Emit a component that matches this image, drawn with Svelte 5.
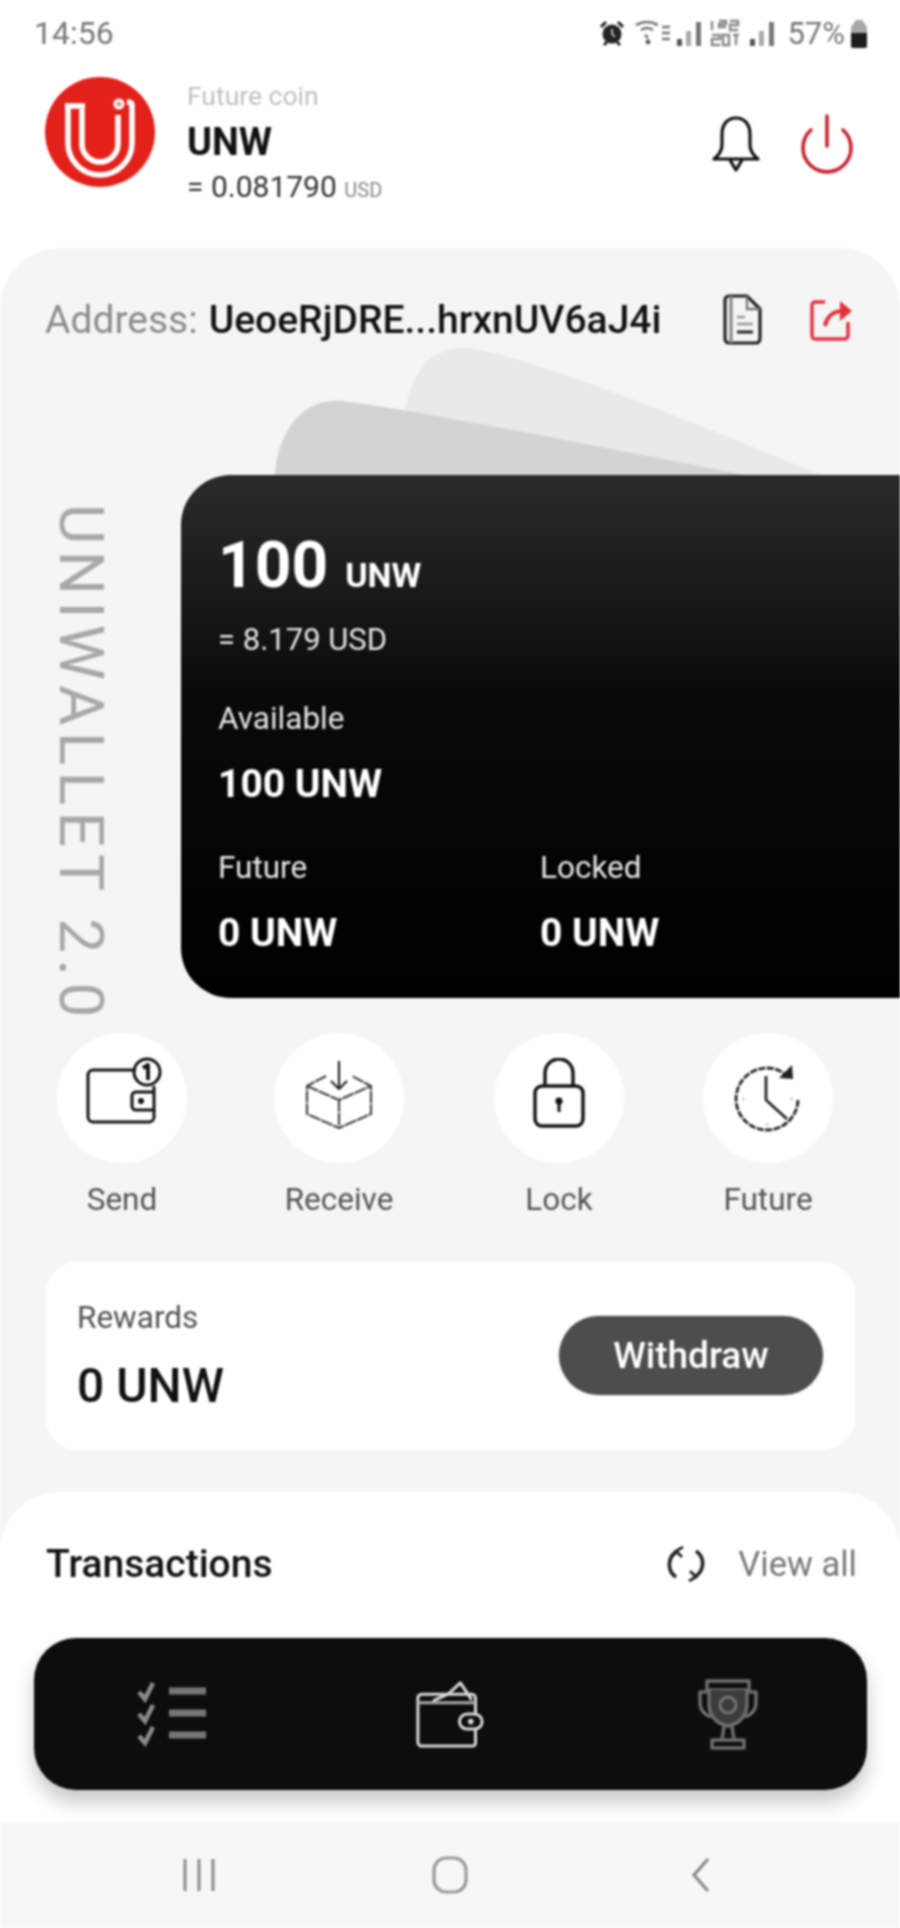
<script>
  const actions = ["send", "receive", "lock", "future"];
  const labels = { send: "Send", receive: "Receive", lock: "Lock", future: "Future" };
</script>

<div class="screen">
  <div class="statusbar">
    <span class="time">14:56</span>
    <div class="status-right">
      <svg width="26" height="26" viewBox="0 0 26 26"><circle cx="13" cy="14" r="9.5" fill="#222"/><path d="M2 7l5-5M24 7l-5-5M5 25l3-3M21 25l-3-3" stroke="#222" stroke-width="3"/><path d="M13 9v5l3 3" stroke="#ddd" stroke-width="1.6" fill="none"/></svg>
      <svg class="st-wifi" width="36" height="26" viewBox="0 0 36 26" fill="none" stroke="#777" stroke-width="2.6"><path d="M1 5q11-6 22 0M6 10q6-4 12 0M10 15l3 3"/><circle cx="13" cy="22" r="2.4" fill="#555" stroke="none"/><path d="M27 7h8M27 13h8M27 19h8"/></svg>
      <svg class="st-sig" width="26" height="26" viewBox="0 0 26 26" fill="#777"><rect x="1" y="19" width="5" height="7" fill="#555"/><rect x="10" y="11" width="5" height="15" fill="#aaa"/><rect x="20" y="2" width="5" height="24"/></svg>
      <svg class="st-lte" width="32" height="28" viewBox="0 0 32 28" fill="none" stroke="#888" stroke-width="2.4"><path d="M3 2v9M10 2h7v3h-7v3h7M21 2h8v4h-8v5h8M3 16h8v4H3v6h8M14 16h6v10h-6zM24 16h6M27 16v10"/></svg>
      <svg class="st-sig" width="26" height="26" viewBox="0 0 26 26" fill="#777"><rect x="1" y="19" width="5" height="7" fill="#555"/><rect x="10" y="11" width="5" height="15" fill="#aaa"/><rect x="20" y="2" width="5" height="24"/></svg>
      <span class="battery-text">57%</span>
      <svg class="st-bat" width="18" height="30" viewBox="0 0 18 30"><path d="M6 2h6l5 7v19a2 2 0 0 1-2 2H3a2 2 0 0 1-2-2V9z" fill="#a8a8a8"/><path d="M1 15h16v13a2 2 0 0 1-2 2H3a2 2 0 0 1-2-2z" fill="#1d1d1d"/></svg>
    </div>
  </div>

  <header class="top">
    <svg class="logo" viewBox="0 0 110 110">
      <circle cx="55" cy="55" r="55" fill="#e3211b"/>
      <path d="M23 30v36a32 32 0 0 0 64 0V28c0-2-2-3-5-3" fill="none" stroke="#fff" stroke-width="5.5"/>
      <path d="M37 32v35a18 18 0 0 0 36 0V38" fill="none" stroke="#fff" stroke-width="5.5"/>
      <path d="M20 29h20" fill="none" stroke="#fff" stroke-width="5.5"/>
      <circle cx="74" cy="27" r="4" fill="#e88" stroke="#fff" stroke-width="3"/>
    </svg>
    <div class="coin">
      <div class="coin-kind">Future coin</div>
      <div class="coin-name">UNW</div>
      <div class="coin-price">= 0.081790 <small>USD</small></div>
    </div>
    <div class="top-icons">
      <svg width="50" height="58" viewBox="0 0 50 58" fill="none" stroke="#111" stroke-width="3.2" stroke-linejoin="round"><path d="M25 3c-9 0-14 7-14 16v11c0 6-3 10-8 14h44c-5-4-8-8-8-14V19c0-9-5-16-14-16z"/><path d="M19 45l6 10 6-10"/></svg>
      <svg width="56" height="60" viewBox="0 0 56 60" fill="none" stroke="#c7242e" stroke-width="3.6" stroke-linecap="round"><path d="M28 2v30"/><path d="M12 16a24 24 0 1 0 32 0"/></svg>
    </div>
  </header>

  <main class="panel">
    <div class="address">
      <span class="address-label">Address:</span>
      <span class="address-value">UeoeRjDRE...hrxnUV6aJ4i</span>
      <svg class="doc" width="44" height="54" viewBox="0 0 44 54" fill="none" stroke="#222" stroke-width="3.2"><path d="M4 7a4 4 0 0 1 4-4h18l13 13v30a4 4 0 0 1-4 4H8a4 4 0 0 1-4-4z"/><path d="M10 3v47" stroke="#888"/><path d="M26 3v13h13" stroke="#777" stroke-width="2.4"/><path d="M16 24h8M16 31h16" stroke="#999" stroke-width="2.6"/><path d="M16 39h16" stroke-width="3"/></svg>
      <svg class="share" width="44" height="44" viewBox="0 0 44 44" fill="none" stroke="#e4303a" stroke-width="3.4" stroke-linejoin="round"><path d="M16 4H6a3 3 0 0 0-3 3v31a3 3 0 0 0 3 3h30a3 3 0 0 0 3-3V24"/><path d="M16 28c2-10 9-15 18-15" stroke-width="4"/><path d="M31 3l12 10-12 10z" fill="#e4303a" stroke="none"/></svg>
    </div>

    <div class="hero">
      <svg class="fans" viewBox="0 0 640 130">
        <path d="M125 130c-2-60 10-132 68-127 70 10 257 87 352 127z" fill="#e9e9e9"/>
        <path d="M0 130c2-30 18-78 68-74 80 10 287 52 402 74z" fill="#d3d3d3"/>
      </svg>
      <div class="brand">UNIWALLET 2.0</div>
      <section class="card">
        <div class="balance"><span class="balance-num">100</span> <span class="balance-unit">UNW</span></div>
        <div class="balance-usd">= 8.179 USD</div>
        <div class="card-label available">Available</div>
        <div class="card-value">100 UNW</div>
        <div class="split">
          <div>
            <div class="card-label">Future</div>
            <div class="card-value">0 UNW</div>
          </div>
          <div>
            <div class="card-label">Locked</div>
            <div class="card-value">0 UNW</div>
          </div>
        </div>
      </section>
    </div>

    <div class="actions">
      {#each actions as a}
        <div class="action">
          <div class="action-circle">
            {#if a === "send"}
              <svg class="icon-send" width="80" height="70" viewBox="0 0 80 70" fill="none" stroke="#111" stroke-width="3" stroke-linejoin="round"><path d="M52 15H9a5 5 0 0 0-5 5v42a5 5 0 0 0 5 5h56a5 5 0 0 0 5-5V55"/><path d="M70 37v-6M70 55H52a4 4 0 0 1-4-4V41a4 4 0 0 1 4-4h18z"/><circle cx="57" cy="46" r="1.5" fill="#111"/><circle cx="63" cy="17" r="13"/><path d="M59 13l5-3v15" stroke-width="3.8"/></svg>
            {:else if a === "receive"}
              <svg class="icon-receive" width="68" height="68" viewBox="0 0 68 68" fill="none" stroke="#444" stroke-width="2.2" stroke-linejoin="round" stroke-dasharray="12 1"><path d="M21 15L2 25v28l32 14 32-14V25L47 15"/><path d="M2 25l32 14 32-14M34 39v28"/><path d="M34 0v27M26 20l8 8 8-8" stroke="#222" stroke-dasharray="none"/></svg>
            {:else if a === "lock"}
              <svg class="icon-lock" width="54" height="70" viewBox="0 0 54 70" fill="none" stroke="#111" stroke-width="3.4"><path d="M13 28V15a14 14 0 0 1 28 0v13"/><rect x="3" y="28" width="48" height="40" rx="7"/><path d="M27 44v10" stroke-width="3"/><circle cx="27" cy="43" r="3.6" fill="#111" stroke="none"/></svg>
            {:else}
              <svg class="icon-future" width="72" height="72" viewBox="0 0 72 72" fill="none" stroke="#222" stroke-width="2.8"><path d="M66 38a31 31 0 1 1-32-32c8 0 15 2 21 8" stroke-dasharray="7 1.5"/><path d="M60 3l1 14-14-1z" fill="#222" stroke="none"/><path d="M34 14v24l21 19"/><path d="M11 37h1M35 62v1M59 37h1" stroke-width="3" stroke="#888"/></svg>
            {/if}
          </div>
          <span>{labels[a]}</span>
        </div>
      {/each}
    </div>

    <section class="rewards">
      <div>
        <div class="rewards-label">Rewards</div>
        <div class="rewards-value">0 UNW</div>
      </div>
      <button class="withdraw">Withdraw</button>
    </section>

    <section class="transactions">
      <div class="tx-head">
        <h2>Transactions</h2>
        <svg class="refresh" width="38" height="36" viewBox="0 0 38 36" fill="none" stroke="#222" stroke-width="3.6"><path d="M11 5a15 15 0 0 0-2 26"/><path d="M27 31a15 15 0 0 0 2-26"/><path d="M16 1l-7 4 6 6M22 35l7-4-6-6" stroke-width="2.8"/></svg>
        <span class="view-all">View all</span>
      </div>
      <nav class="tabbar">
        <svg width="72" height="66" viewBox="0 0 72 66" fill="none" stroke="#8a8a8a"><path d="M2 11l6 7L16 2M2 33l6 7 8-16M2 55l6 7 8-16" stroke-width="4.6"/><path d="M32 10h37M32 32h37M32 54h37" stroke="#777" stroke-width="7"/></svg>
        <svg width="68" height="68" viewBox="0 0 72 72" fill="none" stroke="#d8d8d8" stroke-width="3.2" stroke-linejoin="round"><path d="M6 15h53a4 4 0 0 1 4 4v48a3 3 0 0 1-3 3H6a4 4 0 0 1-4-4V19a4 4 0 0 1 4-4z"/><path d="M2 24h61" stroke="#aaa"/><path d="M18 22l16-7 13-12 12 18"/><rect x="46" y="36" width="24" height="16" rx="8" fill="#0d0d0d"/><circle cx="58" cy="44" r="3" fill="#d8d8d8" stroke="none"/></svg>
        <svg width="62" height="72" viewBox="0 0 62 72" fill="none" stroke="#6e6e6e" stroke-width="3.4" stroke-linejoin="round"><path d="M10 3h42v9H10z"/><path d="M12 12v14c0 12 8 20 19 22 11-2 19-10 19-22V12" fill="#3b3b3b"/><path d="M12 14H3v10c0 8 5 13 11 15M50 14h9v10c0 8-5 13-11 15"/><circle cx="31" cy="27" r="8"/><path d="M27 48l-2 14M35 48l2 14"/><path d="M15 62h32v8H15z"/></svg>
      </nav>
    </section>
  </main>

  <footer class="sysnav">
    <svg width="34" height="34" viewBox="0 0 34 34" stroke="#8a8a8a" stroke-width="3"><path d="M3 1v32M17 1v32M31 1v32"/></svg>
    <svg width="38" height="38" viewBox="0 0 38 38" fill="none" stroke="#999" stroke-width="3.2"><rect x="3" y="2" width="32" height="34" rx="12"/></svg>
    <svg width="22" height="36" viewBox="0 0 22 36" fill="none" stroke="#8a8a8a" stroke-width="3.2"><path d="M18 2L4 18l14 16"/></svg>
  </footer>
</div>

<style>
  :global(body) {
    margin: 0;
    background: #fff;
  }
  .screen {
    width: 900px;
    height: 1928px;
    overflow: hidden;
    display: flex;
    flex-direction: column;
    font-family: Roboto, "Liberation Sans", sans-serif;
    background: #fff;
    color: #111;
    /* the source screenshot is a soft upscale */
    filter: blur(1px);
  }

  /* status bar */
  .statusbar {
    height: 66px;
    padding: 0 32px 0 34px;
    display: flex;
    align-items: center;
    justify-content: space-between;
    flex-shrink: 0;
  }
  .time {
    font-size: 32px;
    color: #777;
  }
  .status-right {
    display: flex;
    align-items: center;
  }
  .st-wifi {
    margin-left: 10px;
  }
  .st-sig {
    margin-left: 5px;
  }
  .st-lte {
    margin-left: 7px;
  }
  .st-lte + .st-sig {
    margin-left: 8px;
  }
  .battery-text {
    font-size: 31px;
    color: #777;
    margin-left: 12px;
  }
  .st-bat {
    margin-left: 5px;
  }

  /* coin header */
  .top {
    height: 182px;
    padding: 11px 44px 0 45px;
    box-sizing: border-box;
    display: flex;
    align-items: flex-start;
    flex-shrink: 0;
  }
  .logo {
    width: 110px;
    height: 110px;
    flex-shrink: 0;
  }
  .coin {
    margin-left: 32px;
    margin-top: 2px;
  }
  .coin-kind {
    font-size: 26.5px;
    line-height: 34px;
    color: #c0c0c0;
  }
  .coin-name {
    font-size: 38px;
    line-height: 42px;
    font-weight: 700;
    margin-top: 8px;
  }
  .coin-price {
    font-size: 30px;
    line-height: 40px;
    margin-top: 4px;
    color: #333;
  }
  .coin-price small {
    font-size: 20px;
    color: #888;
  }
  .top-icons {
    margin-left: auto;
    margin-top: 37px;
    margin-right: 1px;
    display: flex;
    align-items: center;
    gap: 38px;
  }

  /* grey panel */
  .panel {
    flex: 1;
    background: #f5f5f5;
    border-radius: 60px 60px 0 0;
    display: flex;
    flex-direction: column;
    min-height: 0;
  }
  .address {
    height: 72px;
    margin-top: 36px;
    padding: 0 47px 0 45px;
    display: flex;
    align-items: center;
    font-size: 39px;
    font-weight: 500;
  }
  .address-label {
    color: #8b8b8b;
    font-weight: 400;
    margin-right: 11px;
  }
  .doc {
    margin-left: auto;
  }
  .share {
    margin-left: 44px;
  }

  /* balance card */
  .hero {
    position: relative;
    margin-top: 119px;
    display: flex;
    height: 523px;
  }
  .fans {
    position: absolute;
    left: 275px;
    top: -130px;
    width: 640px;
    height: 130px;
  }
  .brand {
    position: absolute;
    left: 50px;
    top: 29px;
    writing-mode: vertical-rl;
    font-size: 62px;
    line-height: 62px;
    letter-spacing: 6.5px;
    color: #a8a8a8;
    white-space: nowrap;
  }
  .card {
    margin-left: 181px;
    flex: 1;
    box-sizing: border-box;
    padding: 54px 0 0 37px;
    border-radius: 50px 0 0 50px;
    background: linear-gradient(#2b2b2b, #0a0a0a 42%, #000);
    color: #fff;
  }
  .balance {
    display: flex;
    align-items: baseline;
    gap: 17px;
    height: 74px;
    line-height: 74px;
  }
  .balance-num {
    font-size: 64px;
    font-weight: 700;
  }
  .balance-unit {
    font-size: 34px;
    font-weight: 700;
  }
  .balance-usd {
    font-size: 31px;
    line-height: 36px;
    margin-top: 19px;
    color: #e4e4e4;
  }
  .card-label {
    font-size: 31.5px;
    line-height: 36px;
    color: #e6e6e6;
  }
  .available {
    margin-top: 43px;
  }
  .card-value {
    font-size: 39px;
    line-height: 44px;
    font-weight: 700;
    margin-top: 25px;
  }
  .split {
    display: flex;
    margin-top: 44px;
  }
  .split > div {
    width: 322px;
  }

  /* round actions */
  .actions {
    height: 177px;
    margin-top: 35px;
    position: relative;
    display: grid;
    grid-template-columns: 217px 220px 209px 1fr;
    padding-left: 12px;
    flex-shrink: 0;
  }
  .action {
    display: flex;
    flex-direction: column;
    align-items: center;
    width: 220px;
    font-size: 31.5px;
    color: #555;
  }
  .action-circle {
    width: 130px;
    height: 130px;
    border-radius: 50%;
    background: #fff;
    display: flex;
    align-items: center;
    justify-content: center;
  }
  .icon-send {
    margin: -16px 0 0 4px;
    flex-shrink: 0;
  }
  .icon-receive {
    margin-top: -6px;
  }
  .icon-lock {
    margin-top: -10px;
  }
  .action span {
    margin-top: 20px;
    line-height: 34px;
  }

  /* rewards */
  .rewards {
    margin: 52px 45px 0 46px;
    height: 188px;
    flex-shrink: 0;
    box-sizing: border-box;
    padding: 0 32px 0 31px;
    background: #fff;
    border-radius: 32px;
    display: flex;
    align-items: center;
    justify-content: space-between;
  }
  .rewards-label {
    font-size: 31.5px;
    line-height: 36px;
    color: #555;
  }
  .rewards-value {
    font-size: 48px;
    line-height: 52px;
    font-weight: 500;
    margin-top: 24px;
  }
  .withdraw {
    width: 264px;
    height: 79px;
    margin-top: -1px;
    border: 0;
    border-radius: 40px;
    background: #4d4d4d;
    color: #fff;
    font: 500 37px Roboto, "Liberation Sans", sans-serif;
    box-shadow: 0 0 2px rgba(0, 0, 0, 0.3);
  }

  /* transactions */
  .transactions {
    margin-top: 42px;
    flex: 1;
    background: #fff;
    border-radius: 60px 60px 0 0;
    position: relative;
    min-height: 0;
  }
  .tx-head {
    display: flex;
    align-items: center;
    padding: 50px 43px 0 46px;
  }
  .tx-head h2 {
    margin: 0;
    font-size: 39px;
    line-height: 44px;
    font-weight: 500;
  }
  .refresh {
    margin-left: auto;
  }
  .view-all {
    margin-left: 33px;
    font-size: 34.5px;
    color: #777;
  }
  .tabbar {
    position: absolute;
    left: 34px;
    right: 33px;
    top: 146px;
    height: 152px;
    background: #0d0d0d;
    border-radius: 42px;
    box-shadow: 0 12px 20px rgba(0, 0, 0, 0.22);
    display: grid;
    grid-template-columns: 1fr 1fr 1fr;
    justify-items: center;
    align-items: center;
    box-sizing: border-box;
  }

  /* android nav */
  .sysnav {
    height: 106px;
    flex-shrink: 0;
    background: #f7f7f7;
    display: grid;
    grid-template-columns: 1fr 1fr 1fr;
    justify-items: center;
    align-items: center;
    padding: 0 73px;
    position: relative;
  }
</style>
